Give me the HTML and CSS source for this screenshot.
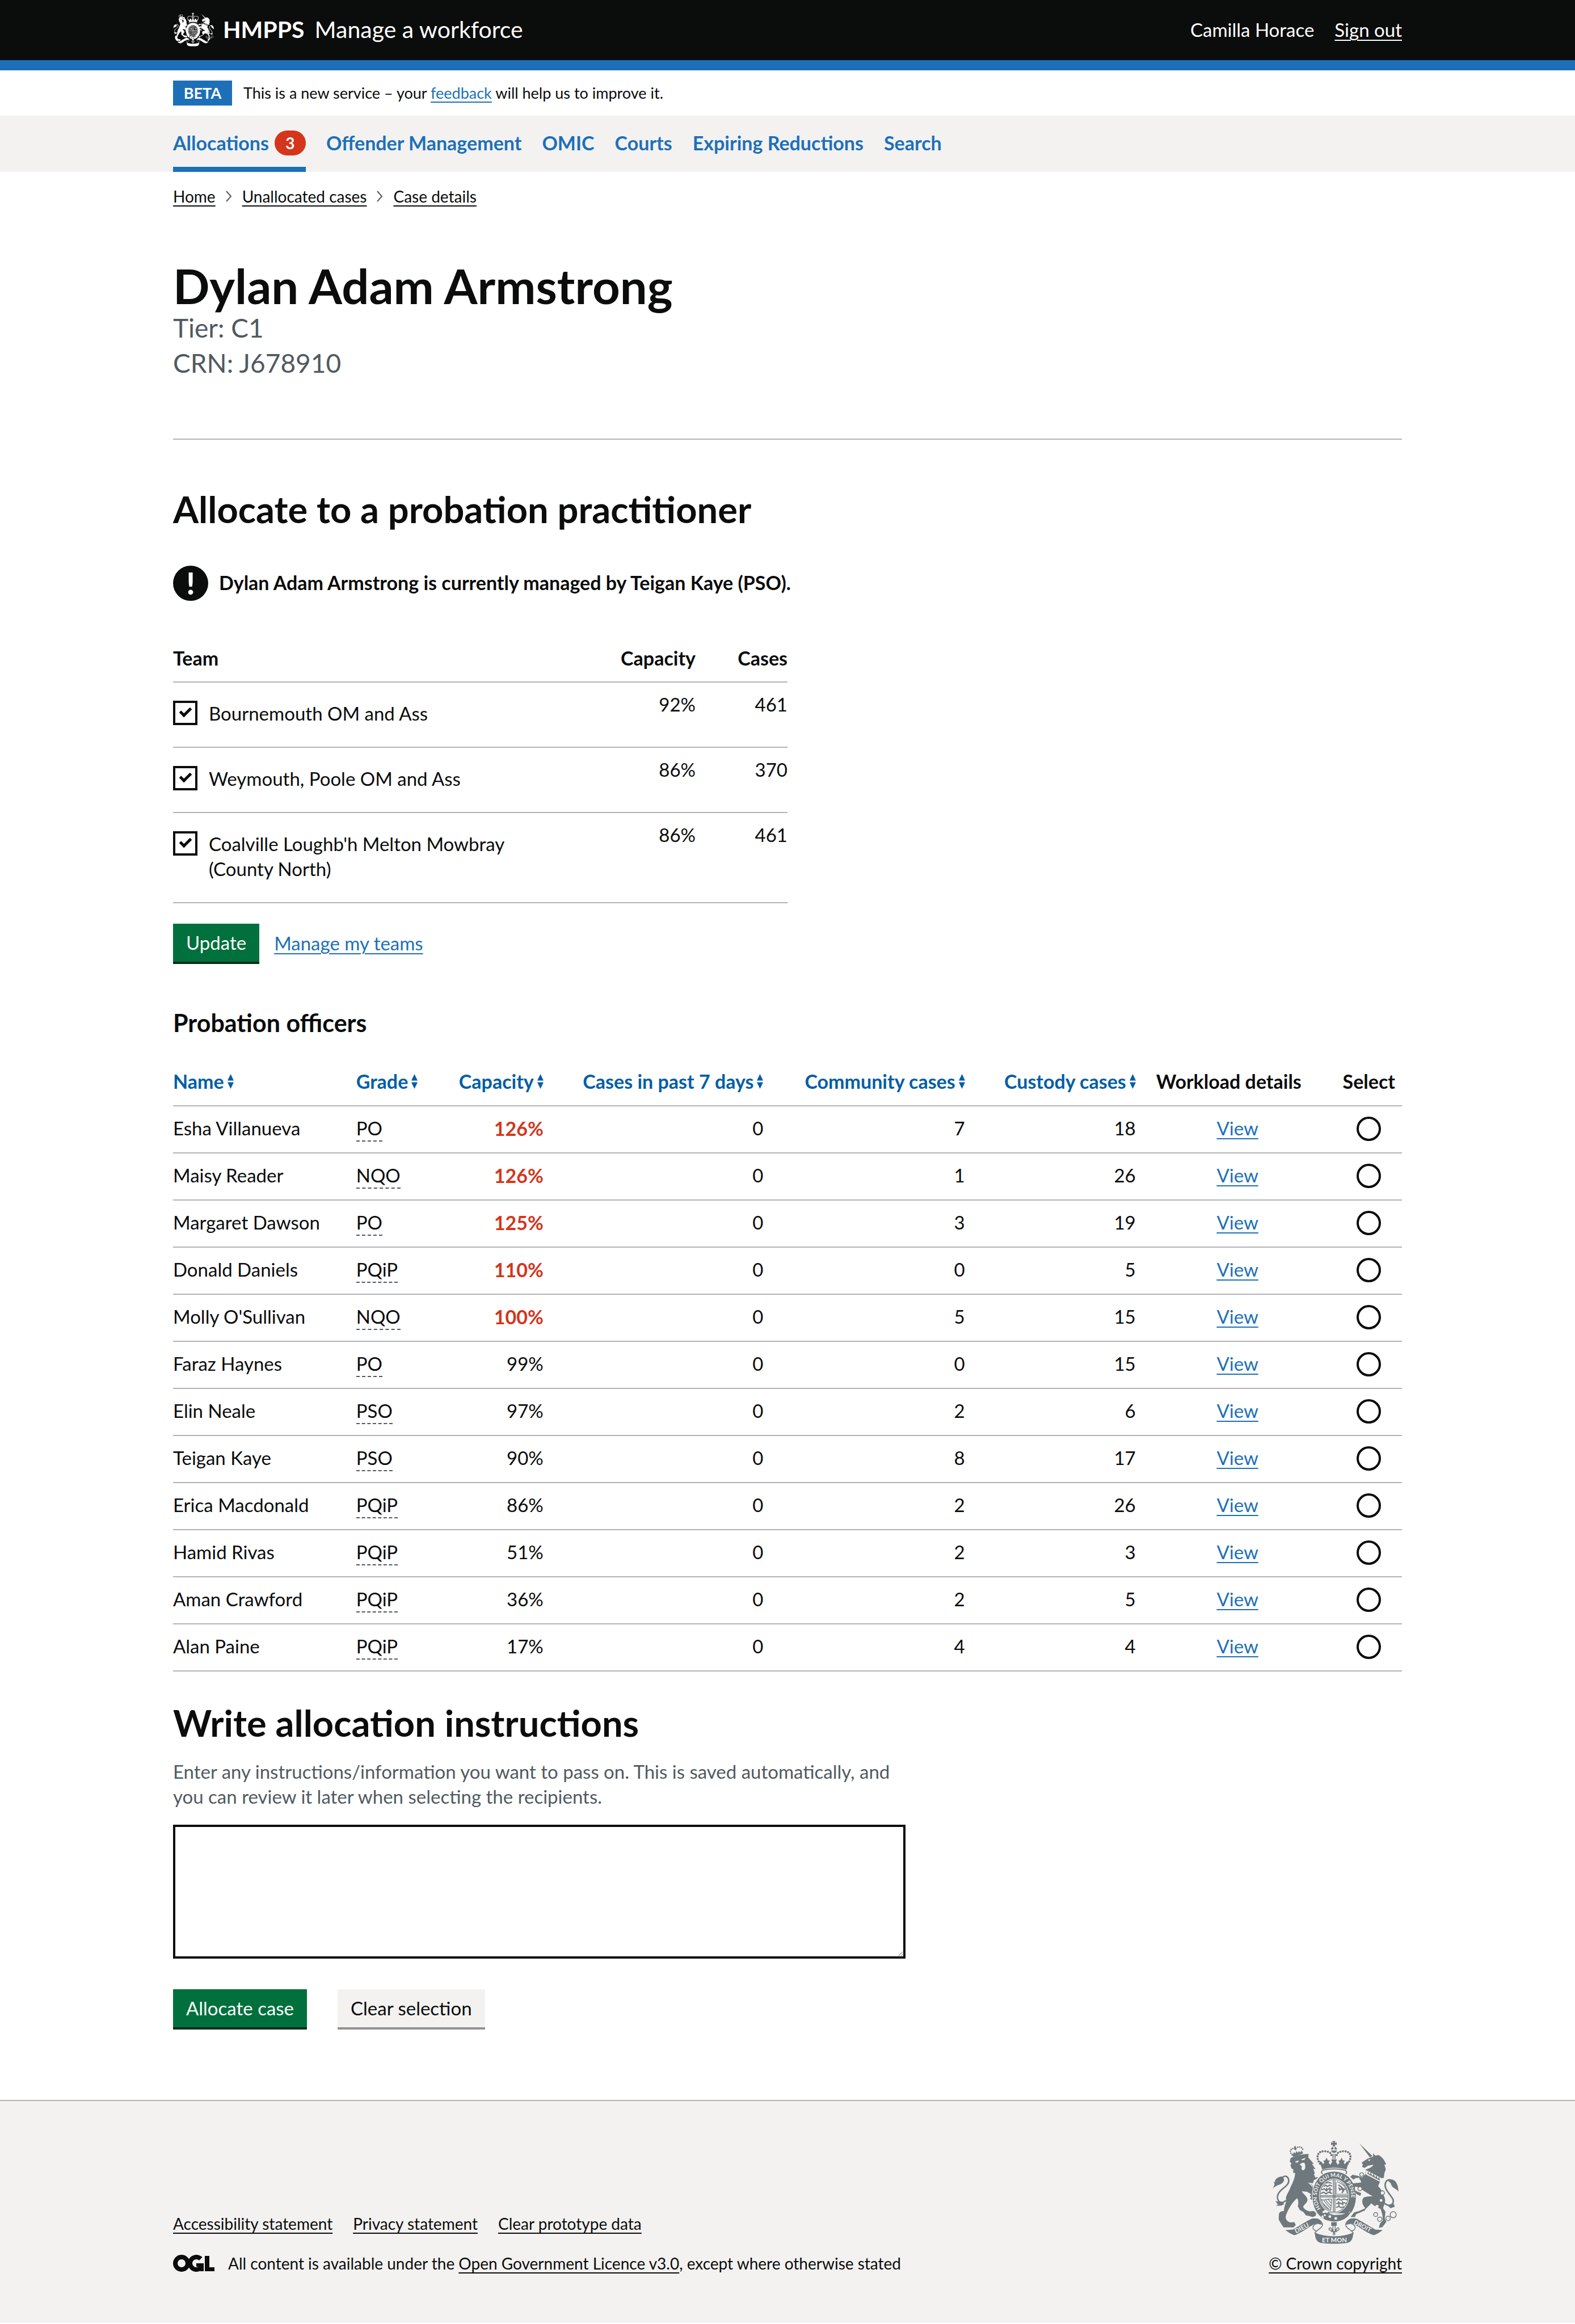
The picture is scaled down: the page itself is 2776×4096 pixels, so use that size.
FILE: index.html
```html
<!DOCTYPE html>
<html lang="en">
<head>
<meta charset="utf-8">
<meta name="viewport" content="width=device-width, initial-scale=1">
<title>Allocate to a probation practitioner - Manage a workforce</title>
<link rel="stylesheet" href="styles.css">
</head>
<body>
<svg class="sprite" aria-hidden="true">
  <symbol id="crest" viewBox="84 98 750 614">
    <!-- lion -->
    <path d="M192 200 235 184 272 178 298 176 297 198 312 215 330 236 318 234 340 268 326 264 336 292 330 296 338 316 356 314 345 326 330 332 325 350 300 348 318 360 345 385 352 405 356 450 345 452 340 470 328 462 322 450 308 446 312 432 306 424 314 416 290 402 258 398C262 412 292 428 292 450 290 470 268 480 266 492 272 506 290 516 306 518L330 516 344 530 340 545 322 552 300 545 282 542 268 522 246 510 234 488C240 465 236 450 230 440 205 460 180 500 164 540 158 560 166 578 190 584L214 582 222 600 208 614 150 614 140 600 130 584 120 566 122 530 134 518 152 516C150 490 170 462 164 445 160 430 176 408 186 386 198 355 218 325 218 290L206 288 208 268 196 262 190 240 198 235 186 222Z"/>
    <path class="hole" d="M218 222 240 214 236 226 222 228ZM256 208 280 200 274 211 258 214ZM245 238 258 230 272 228 278 240 278 262Q266 284 256 266L258 250Z"/>
    <path class="hole-line" d="M298 346 336 386 344 412"/>
    <path class="line" stroke-width="9" d="M164 452C130 486 104 450 116 418 128 382 184 370 180 332 176 308 160 304 144 314"/>
    <path d="M84 388C88 370 118 362 134 355 152 345 162 322 140 310 116 310 96 328 98 344L90 342 96 356ZM100 458 116 476 104 484 132 484 154 476 140 460Z"/>
    <path d="M198 170 206 178 212 164 220 174 226 158 234 170 242 158 248 168 258 156 266 174 206 194Z"/>
    <path class="beads" stroke-width="9" stroke-dasharray="0 12" d="M200 182C184 164 186 144 212 144M222 142C244 128 268 136 264 160"/>
    <path d="M212 132 224 128 220 140 228 144 222 156 212 148Z"/>
    <!-- crown -->
    <path d="M440 98H458L454 110 466 106V124L454 120 458 131H440L444 120 432 124V106L444 110ZM431 150A18 18 0 0 1 446 134V150ZM453 134A18 18 0 0 1 468 150H453ZM431 156H468Q462 170 450 170T431 156ZM441 176H447V206H441ZM453 176H459V206H453Z"/>
    <path class="beads" stroke-width="13" stroke-dasharray="0 15.500" d="M366 234C340 196 350 160 390 160 415 160 436 168 434 188M532 234C560 196 550 160 510 160 485 160 464 168 466 188"/>
    <path d="M372 246 362 220 374 222 386 238 392 228 386 216 398 214 405 198 413 214 424 216 418 230 428 240 438 224 434 208H466L462 224 472 240 482 230 476 216 487 214 495 198 502 214 514 216 508 228 514 238 526 222 538 220 524 270C480 254 420 254 380 270Z"/>
    <path class="line" stroke-width="6" d="M382 274C420 262 480 262 518 274 530 282 522 296 516 300M382 274C370 282 374 292 386 298"/>
    <!-- garter and shield -->
    <path class="shield-halo" d="M450 282C536 282 580 352 580 430S532 578 450 578 322 508 322 430 364 282 450 282Z"/>
    <path d="M450 282C536 282 580 352 580 430S532 578 450 578 322 508 322 430 364 282 450 282Z"/>
    <ellipse class="hole" cx="450" cy="426" rx="90" ry="103"/>
    <ellipse class="line" stroke-width="4" cx="450" cy="426" rx="84" ry="97"/>
    <path class="line" stroke-width="5" d="M446 330V522M455 330V522M364 424H536M364 432H536"/>
    <path class="line" stroke-width="7" d="M388 370 400 362 410 370 424 362 438 368M376 390 392 384 402 394 418 384 438 390M370 412 388 404 402 414 418 404 438 412M398 350 414 346 436 350M404 378 408 400M424 374 426 404"/>
    <path class="line" stroke-width="7" d="M462 452 478 444 492 452 508 444 530 450M462 474 480 466 494 474 510 466 526 474M462 496 478 488 492 496 510 490M476 458 480 488M500 458 502 482"/>
    <path class="line" stroke-width="4" d="M462 346V416H528M466 342C500 350 522 372 528 412"/>
    <path class="line" stroke-width="8" d="M476 360 492 372 508 388 520 384M480 392 494 384 506 396 496 408M476 378 486 384"/>
    <path class="line" stroke-width="4" d="M374 446C388 458 410 440 436 446L430 512C404 504 386 484 374 446ZM388 452 428 500M400 450 430 486M414 446 434 470M382 468 420 506"/>
    <path class="hole" d="M372 548 388 538 380 520 396 510 416 516 410 530 528 530 544 518 556 532Q520 562 470 560L392 540 386 560Z"/>
    <path d="M378 536Q396 520 408 528L450 540 494 538 552 520Q520 578 450 578 402 574 378 536Z"/>
    <circle class="hole" cx="395" cy="541" r="6"/><circle class="hole" cx="425" cy="549" r="8"/><circle class="hole" cx="460" cy="560" r="8"/>
    <!-- unicorn -->
    <path d="M600 113 678 188 664 197ZM683 172 695 186 715 183C745 200 752 222 760 238L750 240 758 268 750 290 746 318 730 322 722 345 712 368C735 390 742 410 752 440 760 462 745 480 742 500L756 520 752 560 762 580 738 612 716 616 724 590 740 572 738 540 728 505C700 490 680 480 672 470 655 490 640 500 634 512L604 526 582 534 574 552H548L570 524 600 516 636 500C618 478 612 460 624 438 640 428 660 430 680 428 650 410 622 395 604 376L576 370 572 392 592 402 612 410 606 426 586 416 560 384 556 352 592 348 612 346 606 330 580 318 566 330 546 312 560 300 590 306 618 316 636 296 640 268C660 262 680 252 684 240L652 246 632 260 616 252 622 240 614 228 650 204 682 192Z"/>
    <path class="hole" d="M640 272 736 322 728 344 638 298ZM650 212 668 208 660 218Z"/>
    <path d="M648 294 652 280 662 300 668 286 678 308 686 294 694 317 702 304 710 326 718 312 724 336Z"/>
    <path class="line" stroke-width="9" d="M750 470C780 494 808 478 802 450 790 420 744 386 756 350 764 326 784 326 796 338"/>
    <path d="M770 334C802 316 832 340 834 402 822 378 796 386 788 352ZM770 484 806 474 812 490 786 500Z"/>
    <g class="line" stroke-width="5"><circle class="hole" cx="614" cy="299" r="11"/><circle class="hole" cx="604" cy="383" r="12"/><circle class="hole" cx="738" cy="408" r="12"/><circle cx="698" cy="537" r="12"/><circle cx="722" cy="565" r="13"/><circle cx="772" cy="560" r="13"/><circle cx="802" cy="538" r="18"/></g>
    <circle class="hole" cx="706" cy="488" r="9"/><circle class="hole" cx="730" cy="453" r="8"/><circle class="hole" cx="595" cy="324" r="7"/>
    <!-- scroll -->
    <g id="scroll-half">
      <path d="M160 630 205 626C250 600 290 574 316 562 350 552 370 572 380 598L348 592C310 596 270 644 212 660Q184 650 160 630Z"/>
      <path class="line" stroke-width="5" d="M346 562C372 570 384 590 380 604 372 622 346 628 334 650M348 592C330 596 320 608 326 622 330 632 340 632 346 636"/>
    </g>
    <use href="#scroll-half" transform="translate(900) scale(-1 1)"/>
    <path d="M335 644C400 674 500 674 565 644 562 680 556 698 530 706 480 714 420 714 370 706 344 698 338 680 335 644Z"/>
    <path d="M433 582H466V604H433Z"/>
    <path class="line" stroke-width="5" d="M450 596C436 612 446 624 444 634L430 630C416 634 418 616 428 616 440 618 438 634 450 650 462 634 460 618 472 616 482 616 484 634 470 630L456 634C454 624 464 612 450 596M430 638H470"/>
    <circle class="line" stroke-width="4" cx="450" cy="653" r="6"/>
  </symbol>
  <symbol id="sort" viewBox="0 0 11 26"><path d="M5.500 0 11 11.500H0ZM0 14.500H11L5.500 26Z"/></symbol>
  <symbol id="chevron" viewBox="0 0 11 20"><path fill="none" stroke="currentColor" stroke-width="2" d="M1 1 9 10 1 19"/></symbol>
</svg>

<header class="header">
  <div class="container header-inner">
    <a class="brand" href="#">
      <svg class="crest crest-header" aria-hidden="true"><use href="#crest"/></svg>
      <span class="brand-org">HMPPS</span>
      <span class="brand-service">Manage a workforce</span>
    </a>
    <nav class="account" aria-label="Account">
      <span>Camilla Horace</span>
      <a href="#">Sign out</a>
    </nav>
  </div>
</header>

<div class="container phase">
  <strong class="tag">BETA</strong>
  <span>This is a new service – your <a class="link" href="#">feedback</a> will help us to improve it.</span>
</div>

<nav class="primary" aria-label="Primary navigation">
  <ul class="container primary-list">
    <li><a class="current" href="#" aria-current="page">Allocations <span class="badge">3</span></a></li>
    <li><a href="#">Offender Management</a></li>
    <li><a href="#">OMIC</a></li>
    <li><a href="#">Courts</a></li>
    <li><a href="#">Expiring Reductions</a></li>
    <li><a href="#">Search</a></li>
  </ul>
</nav>

<div class="container">
  <nav aria-label="Breadcrumb">
    <ol class="breadcrumbs">
      <li><a href="#">Home</a></li>
      <li><svg class="chevron" aria-hidden="true"><use href="#chevron"/></svg><a href="#">Unallocated cases</a></li>
      <li><svg class="chevron" aria-hidden="true"><use href="#chevron"/></svg><a href="#">Case details</a></li>
    </ol>
  </nav>

  <main>
    <h1>Dylan Adam Armstrong</h1>
    <p class="caption">Tier: C1</p>
    <p class="caption">CRN: J678910</p>
    <hr>

    <h2>Allocate to a probation practitioner</h2>
    <div class="warning">
      <span class="warning-icon" aria-hidden="true">!</span>
      <strong class="warning-text">Dylan Adam Armstrong is currently managed by Teigan Kaye (PSO).</strong>
    </div>

    <form>
      <table class="teams">
        <colgroup><col class="team-name"><col class="team-capacity"><col class="team-cases"></colgroup>
        <thead>
          <tr><th scope="col">Team</th><th scope="col" class="num">Capacity</th><th scope="col" class="num">Cases</th></tr>
        </thead>
        <tbody>
          <tr><td class="pick"><div class="choice"><input class="checkbox" type="checkbox" id="team-1" checked><label for="team-1">Bournemouth OM and Ass</label></div></td><td class="num">92%</td><td class="num">461</td></tr>
          <tr><td class="pick"><div class="choice"><input class="checkbox" type="checkbox" id="team-2" checked><label for="team-2">Weymouth, Poole OM and Ass</label></div></td><td class="num">86%</td><td class="num">370</td></tr>
          <tr><td class="pick"><div class="choice"><input class="checkbox" type="checkbox" id="team-3" checked><label for="team-3">Coalville Loughb'h Melton Mowbray (County North)</label></div></td><td class="num">86%</td><td class="num">461</td></tr>
        </tbody>
      </table>
      <div class="actions actions-teams">
        <button class="button" type="button">Update</button>
        <a class="link" href="#">Manage my teams</a>
      </div>
    </form>

    <form>
      <h3>Probation officers</h3>
      <table class="officers">
        <colgroup><col class="c-name"><col class="c-grade"><col class="c-capacity"><col class="c-week"><col class="c-community"><col class="c-custody"><col class="c-details"><col class="c-select"></colgroup>
        <thead>
          <tr>
            <th scope="col"><button class="sort" type="button">Name<svg aria-hidden="true"><use href="#sort"/></svg></button></th>
            <th scope="col"><button class="sort" type="button">Grade<svg aria-hidden="true"><use href="#sort"/></svg></button></th>
            <th scope="col" class="num"><button class="sort" type="button">Capacity<svg aria-hidden="true"><use href="#sort"/></svg></button></th>
            <th scope="col" class="num"><button class="sort" type="button">Cases in past 7 days<svg aria-hidden="true"><use href="#sort"/></svg></button></th>
            <th scope="col" class="num"><button class="sort" type="button">Community cases<svg aria-hidden="true"><use href="#sort"/></svg></button></th>
            <th scope="col" class="num"><button class="sort" type="button">Custody cases<svg aria-hidden="true"><use href="#sort"/></svg></button></th>
            <th scope="col">Workload details</th>
            <th scope="col" class="select">Select</th>
          </tr>
        </thead>
        <tbody>
          <tr><td>Esha Villanueva</td><td><abbr>PO</abbr></td><td class="num over">126%</td><td class="num">0</td><td class="num">7</td><td class="num">18</td><td class="view"><a class="link" href="#">View</a></td><td class="select"><input class="radio" type="radio" name="officer" aria-label="Esha Villanueva"></td></tr>
          <tr><td>Maisy Reader</td><td><abbr>NQO</abbr></td><td class="num over">126%</td><td class="num">0</td><td class="num">1</td><td class="num">26</td><td class="view"><a class="link" href="#">View</a></td><td class="select"><input class="radio" type="radio" name="officer" aria-label="Maisy Reader"></td></tr>
          <tr><td>Margaret Dawson</td><td><abbr>PO</abbr></td><td class="num over">125%</td><td class="num">0</td><td class="num">3</td><td class="num">19</td><td class="view"><a class="link" href="#">View</a></td><td class="select"><input class="radio" type="radio" name="officer" aria-label="Margaret Dawson"></td></tr>
          <tr><td>Donald Daniels</td><td><abbr>PQiP</abbr></td><td class="num over">110%</td><td class="num">0</td><td class="num">0</td><td class="num">5</td><td class="view"><a class="link" href="#">View</a></td><td class="select"><input class="radio" type="radio" name="officer" aria-label="Donald Daniels"></td></tr>
          <tr><td>Molly O'Sullivan</td><td><abbr>NQO</abbr></td><td class="num over">100%</td><td class="num">0</td><td class="num">5</td><td class="num">15</td><td class="view"><a class="link" href="#">View</a></td><td class="select"><input class="radio" type="radio" name="officer" aria-label="Molly O'Sullivan"></td></tr>
          <tr><td>Faraz Haynes</td><td><abbr>PO</abbr></td><td class="num">99%</td><td class="num">0</td><td class="num">0</td><td class="num">15</td><td class="view"><a class="link" href="#">View</a></td><td class="select"><input class="radio" type="radio" name="officer" aria-label="Faraz Haynes"></td></tr>
          <tr><td>Elin Neale</td><td><abbr>PSO</abbr></td><td class="num">97%</td><td class="num">0</td><td class="num">2</td><td class="num">6</td><td class="view"><a class="link" href="#">View</a></td><td class="select"><input class="radio" type="radio" name="officer" aria-label="Elin Neale"></td></tr>
          <tr><td>Teigan Kaye</td><td><abbr>PSO</abbr></td><td class="num">90%</td><td class="num">0</td><td class="num">8</td><td class="num">17</td><td class="view"><a class="link" href="#">View</a></td><td class="select"><input class="radio" type="radio" name="officer" aria-label="Teigan Kaye"></td></tr>
          <tr><td>Erica Macdonald</td><td><abbr>PQiP</abbr></td><td class="num">86%</td><td class="num">0</td><td class="num">2</td><td class="num">26</td><td class="view"><a class="link" href="#">View</a></td><td class="select"><input class="radio" type="radio" name="officer" aria-label="Erica Macdonald"></td></tr>
          <tr><td>Hamid Rivas</td><td><abbr>PQiP</abbr></td><td class="num">51%</td><td class="num">0</td><td class="num">2</td><td class="num">3</td><td class="view"><a class="link" href="#">View</a></td><td class="select"><input class="radio" type="radio" name="officer" aria-label="Hamid Rivas"></td></tr>
          <tr><td>Aman Crawford</td><td><abbr>PQiP</abbr></td><td class="num">36%</td><td class="num">0</td><td class="num">2</td><td class="num">5</td><td class="view"><a class="link" href="#">View</a></td><td class="select"><input class="radio" type="radio" name="officer" aria-label="Aman Crawford"></td></tr>
          <tr><td>Alan Paine</td><td><abbr>PQiP</abbr></td><td class="num">17%</td><td class="num">0</td><td class="num">4</td><td class="num">4</td><td class="view"><a class="link" href="#">View</a></td><td class="select"><input class="radio" type="radio" name="officer" aria-label="Alan Paine"></td></tr>
        </tbody>
      </table>

      <h2 class="instructions-title"><label for="instructions">Write allocation instructions</label></h2>
      <p class="hint" id="instructions-hint">Enter any instructions/information you want to pass on. This is saved automatically, and you can review it later when selecting the recipients.</p>
      <textarea class="textarea" id="instructions" aria-describedby="instructions-hint"></textarea>
      <div class="actions actions-case">
        <button class="button" type="button">Allocate case</button>
        <button class="button button-secondary" type="reset">Clear selection</button>
      </div>
    </form>
  </main>
</div>

<footer class="footer">
  <div class="container footer-inner">
    <div class="footer-meta">
      <ul class="footer-links">
        <li><a href="#">Accessibility statement</a></li>
        <li><a href="#">Privacy statement</a></li>
        <li><a href="#">Clear prototype data</a></li>
      </ul>
      <div class="licence">
        <svg class="ogl" viewBox="0 0 73 30" role="img" aria-label="OGL">
          <circle cx="15" cy="15" r="11" fill="none" stroke="currentColor" stroke-width="8"/>
          <circle cx="41" cy="15" r="11" fill="none" stroke="currentColor" stroke-width="8" stroke-dasharray="54 16" transform="rotate(32 41 15)"/>
          <rect x="41" y="15" width="13" height="6"/><rect x="48" y="15" width="6" height="14"/>
          <rect x="56" y="2" width="8" height="27"/><rect x="56" y="22" width="17" height="7"/>
        </svg>
        <span>All content is available under the <a href="#">Open Government Licence v3.0</a>, except where otherwise stated</span>
      </div>
    </div>
    <a class="copyright" href="#">
      <svg class="crest crest-footer" viewBox="84 98 750 614" aria-hidden="true">
        <use href="#crest" x="84" y="98" width="750" height="614"/>
        <path id="garter" fill="none" d="M388 519A102 115 0 1 1 512 519"/>
        <g class="motto">
          <text font-size="32"><textPath href="#garter" startOffset="24">HON SOIT QUI MAL Y PENSE</textPath></text>
          <text font-size="38" transform="translate(224 650) rotate(-28)">DIEU</text>
          <text font-size="38" transform="translate(378 701)">ET MON</text>
          <text font-size="36" transform="translate(564 592) rotate(27)">DROIT</text>
        </g>
      </svg>
      <span>© Crown copyright</span>
    </a>
  </div>
</footer>
</body>
</html>
```
FILE: styles.css
```css
* { box-sizing: border-box; }

body {
  margin: 0;
  background: #fff;
  color: #0b0c0c;
  font: 33px/44px Lato, "Liberation Sans", sans-serif;
}

h1, h2, h3, p, ul, ol { margin: 0; padding: 0; }
ul, ol { list-style: none; }
svg { fill: currentColor; flex: none; }

a {
  color: inherit;
  text-decoration-thickness: 2px;
  text-underline-offset: 5px;
}

.link { color: #1d70b8; }
.sprite { position: absolute; width: 0; height: 0; }

.container {
  width: calc(100% - 106px);
  max-width: 2166px;
  margin: 0 auto;
}

/* Header */
.header {
  background: #0b0c0c;
  border-bottom: 18px solid #1d70b8;
  color: #fff;
}

.header-inner {
  display: flex;
  justify-content: space-between;
  align-items: center;
  padding: 22px 0 24px;
}

.brand {
  display: flex;
  align-items: center;
  text-decoration: none;
  font-size: 41px;
  line-height: 60px;
}

.brand-org { margin: 0 18px 0 16px; font-weight: 700; }
.account { display: flex; gap: 36px; }

/* Crest */
.crest { --ground: #f3f2f1; }
.crest-header { --ground: #0b0c0c; width: 72px; height: 60px; }
.crest-footer { width: 222px; height: 182px; color: #6f787c; }
.hole { fill: var(--ground); }
.line { fill: none; stroke: currentColor; }
.line .hole { fill: var(--ground); }
.hole-line { fill: none; stroke: var(--ground); stroke-width: 4px; }
.shield-halo { fill: none; stroke: var(--ground); stroke-width: 8px; }
.beads { fill: none; stroke: currentColor; stroke-linecap: round; }
.motto { fill: #f3f2f1; font-family: Lato, "Liberation Sans", sans-serif; font-weight: 700; }

/* Phase banner */
.phase {
  display: flex;
  align-items: center;
  gap: 20px;
  padding: 18px 0;
  font-size: 27px;
}

.tag {
  min-width: 104px;
  background: #1d70b8;
  color: #fff;
  text-align: center;
}

/* Primary navigation */
.primary { background: #f3f2f1; }
.primary-list { display: flex; gap: 36px; }

.primary-list a {
  display: flex;
  align-items: center;
  gap: 10px;
  height: 99px;
  padding-top: 6px;
  border-bottom: 9px solid transparent;
  color: #1d70b8;
  font-size: 34px;
  font-weight: 700;
  text-decoration: none;
}

.primary-list .current { border-color: #1d70b8; }

.badge {
  width: 55px;
  border-radius: 22px;
  background: #d4351c;
  color: #fff;
  font-size: 28px;
  text-align: center;
}

/* Breadcrumbs */
.breadcrumbs {
  display: flex;
  gap: 18px;
  padding-top: 25px;
  font-size: 28px;
  line-height: 36px;
}

.breadcrumbs li { display: flex; align-items: center; gap: 18px; }
.chevron { width: 11px; height: 20px; color: #505a5f; }

/* Headings */
h1 { margin-top: 95px; font-size: 85px; line-height: 88px; }
h2 { font-size: 65px; line-height: 72px; }
h3 { font-size: 43px; line-height: 52px; }
.caption { color: #505a5f; font-size: 46px; line-height: 62px; }

hr {
  margin: 102px 0 86px;
  border: 0;
  border-top: 2px solid #b1b4b6;
}

/* Warning */
.warning {
  display: flex;
  align-items: center;
  gap: 19px;
  margin: 64px 0 60px;
}

.warning-icon {
  width: 62px;
  border-radius: 50%;
  background: #0b0c0c;
  color: #fff;
  font-size: 53px;
  font-weight: 900;
  line-height: 62px;
  text-align: center;
}

.warning-text { padding-bottom: 3px; font-size: 34px; }

/* Tables */
table {
  width: 100%;
  border-collapse: separate;
  border-spacing: 0;
  table-layout: fixed;
}

th, td {
  padding: 17px 36px 21px 0;
  border-bottom: 2px solid #b1b4b6;
  text-align: left;
  vertical-align: top;
}

th { padding-top: 19px; padding-bottom: 20px; font-size: 34px; white-space: nowrap; }
td { line-height: 43px; }
.num { text-align: right; }

.teams { width: 50%; }
.teams th { padding-bottom: 19px; }
.teams th, .teams td { padding-right: 32px; }
.teams th:last-child, .teams td:last-child { padding-right: 0; }
.team-name { width: 69%; }
.team-capacity { width: 19%; }
.team-cases { width: 12%; }
.teams .pick { padding: 32px 0 37px; }

.choice {
  display: flex;
  gap: 20px;
  max-width: 680px;
  line-height: 44px;
}

.checkbox, .radio {
  appearance: none;
  flex: none;
  width: 43px;
  height: 43px;
  margin: 0;
  border: 4px solid #0b0c0c;
  background: #fff;
}

.checkbox { display: grid; justify-content: center; padding-top: 8px; }

.checkbox:checked::before {
  box-sizing: border-box;
  content: "";
  width: 20px;
  height: 12px;
  border: solid #0b0c0c;
  border-width: 0 0 5px 5px;
  transform: rotate(-45deg);
}

.radio { display: block; margin: 0 auto; border-radius: 50%; }
.radio:checked { background: radial-gradient(#0b0c0c 50%, #fff 52%); }

.c-name { width: 14.9%; }
.c-grade { width: 8.2%; }
.c-capacity { width: 8.7%; }
.c-week { width: 17.9%; }
.c-community { width: 16.4%; }
.c-custody { width: 13.9%; }
.c-details { width: 14.9%; }
.c-select { width: 5.1%; }

.sort {
  display: inline-flex;
  align-items: center;
  gap: 6px;
  padding: 0;
  border: 0;
  background: none;
  color: #005ea5;
  font: inherit;
  vertical-align: top;
}

.sort svg { width: 11px; height: 26px; }

abbr {
  display: inline-block;
  border-bottom: 2px dashed #505a5f;
  margin-bottom: -2px;
}

.over { color: #d4351c; font-size: 34px; font-weight: 700; }
.view { text-align: center; }
.officers .select { padding-right: 6px; padding-left: 0; text-align: center; }
td.select { padding-top: 18px; padding-bottom: 20px; }

/* Buttons */
.actions { display: flex; align-items: center; }
.actions-teams { gap: 26px; margin: 36px 0 82px; }
.actions-case { gap: 54px; margin: 54px 0 128px; }

.button {
  padding: 11px 23px 12px;
  border: 0;
  background: #00703c;
  box-shadow: 0 4px 0 #002d18;
  color: #fff;
  font: inherit;
}

.button-secondary {
  background: #f3f2f1;
  box-shadow: 0 4px 0 #929191;
  color: #0b0c0c;
}

/* Officers and instructions */
.officers { margin-top: 36px; }
.instructions-title { margin: 54px 0 28px; }
.hint { max-width: 1300px; color: #505a5f; }

.textarea {
  display: block;
  width: 100%;
  max-width: 1291px;
  height: 236px;
  margin-top: 28px;
  padding: 8px;
  border: 4px solid #0b0c0c;
  font: inherit;
  resize: vertical;
}

/* Footer */
.footer {
  padding: 70px 0 87px;
  border-top: 2px solid #b1b4b6;
  background: #f3f2f1;
  font-size: 28px;
  line-height: 36px;
}

.footer-inner { display: flex; justify-content: space-between; align-items: flex-end; }
.footer-meta { display: grid; gap: 34px; }
.footer-links { display: flex; gap: 36px; }
.licence { display: flex; align-items: center; gap: 24px; }
.ogl { width: 73px; height: 30px; }

.copyright {
  display: grid;
  justify-items: center;
  gap: 16px;
}
```
